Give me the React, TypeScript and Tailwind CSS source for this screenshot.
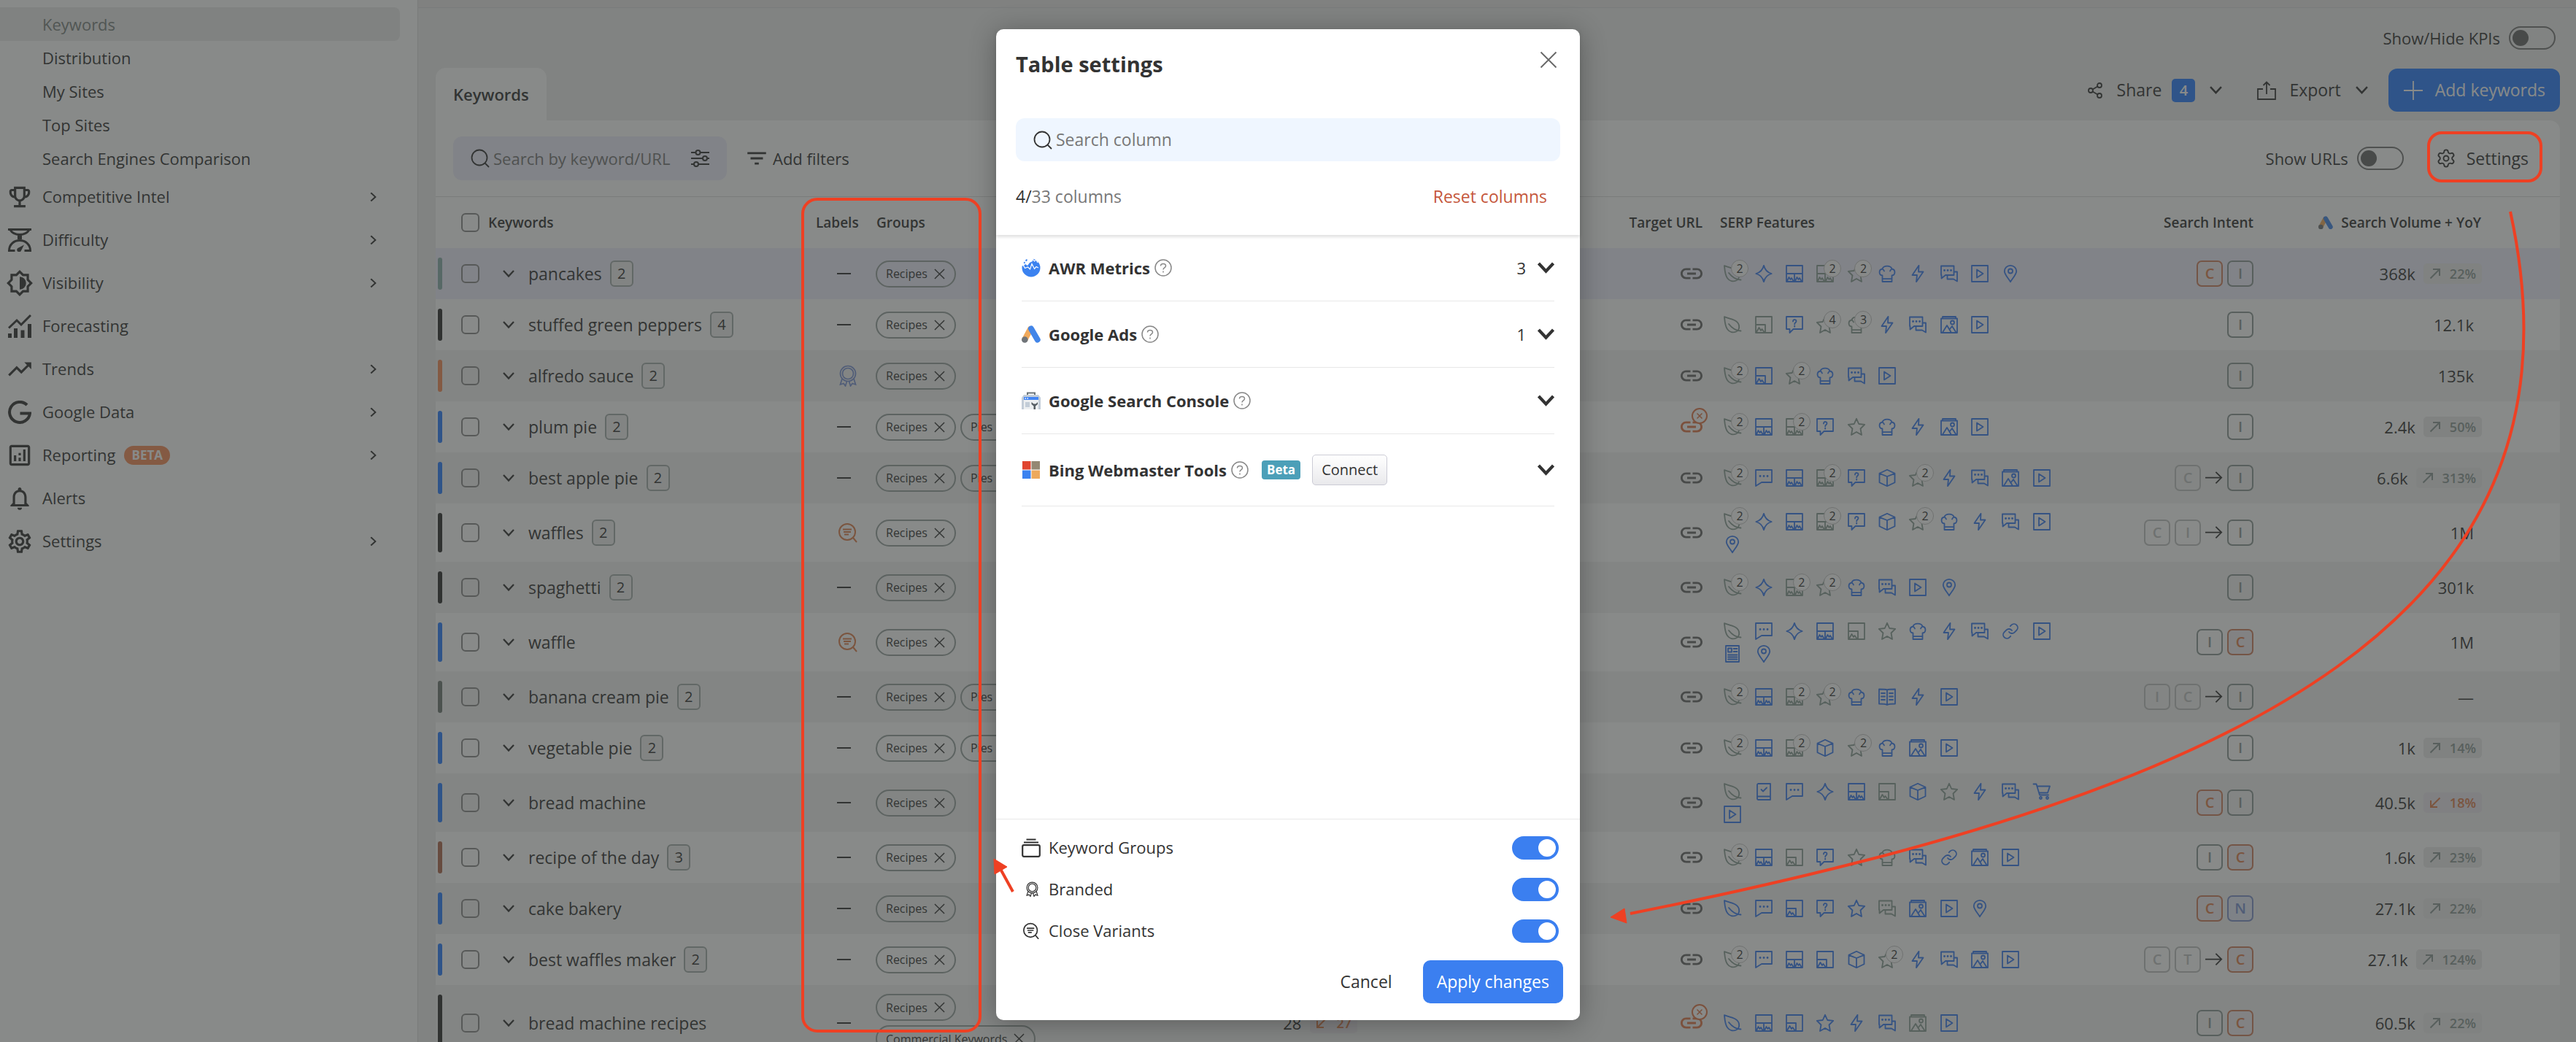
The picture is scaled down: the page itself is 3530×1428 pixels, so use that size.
import type { ReactNode } from "react";
import clsx from "clsx";
import { Link, Settings, Share2 } from "lucide-react";
import {
  MdFilterList,
  MdLink,
  MdOutlineAnalytics,
  MdOutlineBrightness6,
  MdOutlineEmojiEvents,
  MdOutlineNotifications,
  MdOutlineSettings,
  MdTrendingUp,
} from "react-icons/md";

type Row = {
  keyword: string;
  variants?: number;
  bar: string;
  label?: "branded" | "variant";
  groups?: string[];
  broken?: boolean;
  rank?: string;
  rankChange?: string;
  features: string; // "leaf:2" = icon with a count, "-leaf" = greyed out
  was?: string;
  intent: string;
  volume: string;
  yoy?: string;
  down?: boolean;
};

const rows: Row[] = [
  { keyword: "pancakes", variants: 2, bar: "bg-[#8ab0ac]", features: "leaf:2 spark imgs imgs:2 star:2 chef bolt chat play pin", intent: "CI", volume: "368k", yoy: "22%" },
  { keyword: "stuffed green peppers", variants: 4, bar: "bg-[#2e2e2e]", features: "-leaf -thumb ask star:4 chef:3 bolt chat image play", intent: "I", volume: "12.1k" },
  { keyword: "alfredo sauce", variants: 2, bar: "bg-[#f68c5a]", label: "branded", features: "leaf:2 thumb star:2 chef chat play", intent: "I", volume: "135k" },
  { keyword: "plum pie", variants: 2, bar: "bg-blue-500", groups: ["Recipes", "Pies"], broken: true, features: "leaf:2 imgs imgs:2 ask -star chef bolt image play", intent: "I", volume: "2.4k", yoy: "50%" },
  { keyword: "best apple pie", variants: 2, bar: "bg-blue-500", groups: ["Recipes", "Pies"], features: "leaf:2 comment imgs imgs:2 ask box star:2 bolt chat image play", was: "C", intent: "I", volume: "6.6k", yoy: "313%" },
  { keyword: "waffles", variants: 2, bar: "bg-[#2e2e2e]", label: "variant", features: "leaf:2 spark imgs imgs:2 ask box star:2 chef bolt chat play pin", was: "CI", intent: "I", volume: "1M" },
  { keyword: "spaghetti", variants: 2, bar: "bg-[#2e2e2e]", features: "leaf:2 spark imgs:2 star:2 chef chat play pin", intent: "I", volume: "301k" },
  { keyword: "waffle", bar: "bg-blue-500", label: "variant", features: "-leaf comment spark imgs -thumb -star chef bolt chat link play news pin", intent: "IC", volume: "1M" },
  { keyword: "banana cream pie", variants: 2, bar: "bg-[#707a75]", groups: ["Recipes", "Pies"], features: "leaf:2 imgs imgs:2 star:2 chef book bolt play", was: "IC", intent: "I", volume: "—" },
  { keyword: "vegetable pie", variants: 2, bar: "bg-blue-500", groups: ["Recipes", "Pies"], features: "leaf:2 imgs imgs:2 box star:2 chef image play", intent: "I", volume: "1k", yoy: "14%" },
  { keyword: "bread machine", bar: "bg-blue-500", features: "-leaf doc comment spark imgs -thumb box -star bolt chat cart play", intent: "CI", volume: "40.5k", yoy: "18%", down: true },
  { keyword: "recipe of the day", variants: 3, bar: "bg-[#b06a50]", features: "leaf:2 imgs -thumb ask -star -chef chat link image play", intent: "IC", volume: "1.6k", yoy: "23%" },
  { keyword: "cake bakery", bar: "bg-blue-500", features: "leaf comment thumb ask star -chat image play pin", intent: "CN", volume: "27.1k", yoy: "22%" },
  { keyword: "best waffles maker", variants: 2, bar: "bg-blue-500", features: "leaf:2 comment imgs thumb box star:2 bolt chat image play", was: "CT", intent: "C", volume: "27.1k", yoy: "124%" },
  { keyword: "bread machine recipes", bar: "bg-[#2e2e2e]", groups: ["Recipes", "Commercial Keywords"], broken: true, rank: "28", rankChange: "27", features: "leaf imgs thumb star bolt chat -image play", intent: "IC", volume: "60.5k", yoy: "22%" },
];

const featurePaths: Record<string, ReactNode> = {
  leaf: <path d="M1 1.2c7 2.6 18.5 3.8 20 11.8.8 4-1 7-4 8.500-4 1.700-9 1-12-3.500C1.800 13.500 1.500 7 1 1.200zM7 11c3.500 4.500 9 9.300 16.500 9.500" />,
  spark: <path d="M12 .8c1.400 6 4.500 9.600 10.700 11.200C16.500 13.600 13.400 17.200 12 23.200 10.600 17.200 7.500 13.600 1.300 12 7.500 10.400 10.600 6.800 12 .8z" />,
  imgs: <path d="M1 1h22v22H1zM1 12h22M12 12v11M2 22l2.500-5 2 3 1.500-2 2.500 4M13 22l2.500-5 2 3 1.500-2 2.500 4" />,
  thumb: <path d="M1 1h22v22H1zM1 12h13v11M2 22l3.500-6 2.500 4 1.500-2 3 4" />,
  ask: <path d="M1 1h22v17H10.500L5.500 23v-5H1zM10 7.500c0-3.500 4.500-3 4.500-.3 0 1.800-2.300 1.800-2.300 4M12.200 13.500v1.200" />,
  comment: (
    <>
      <path d="M1 1h22v17H9l-8 5z" />
      <path d="M7 9.500h.1M12 9.500h.1M17 9.500h.1" strokeWidth="2.800" />
    </>
  ),
  box: <path d="M12 .8l10.500 5v12.400L12 23.200l-10.500-5V5.800zM1.500 5.800L12 10l10.500-4.200M12 10v13" />,
  star: <path d="M12 .8l3.200 7.200 8 .9-5.700 5.600 1.500 8.500-7-4-7 4 1.500-8.500L.8 8.900l8-.9z" />,
  chef: <path d="M5.500 23V14.500C.5 14 0 6.500 5.500 5.500 7 .2 17 .2 18.500 5.500 24 6.500 23.500 14 18.500 14.500V23zM5.500 19.200h13M8 8.500c-.4-1-1.200-2.200-2.500-3M16 8.500c.4-1 1.200-2.200 2.500-3" />,
  bolt: <path d="M13.500 .8L4.500 14h6.500l-1 9.200L19.500 9.500h-6.500z" />,
  chat: (
    <>
      <path d="M1 1.500h17.500v12.500H7l-5.500 4.500V14H1zM18.500 9.500h4.500v13l-5-3H9.500V14" />
      <path d="M5.500 7.500h.1M10 7.500h.1M14.500 7.500h.1" strokeWidth="2.800" />
    </>
  ),
  image: <path d="M3 1h18v2.500M1 3.500h22V23H1zM3 3.500V1M3 22.500l6-9.500 5.500 9M12.500 18.500l3.500-4.500 5.500 8.500M14 9a2.500 2.500 0 105 0 2.500 2.500 0 10-5 0" />,
  play: <path d="M1 1h22v22H1zM8 6.500v11l8.500-5.500z" />,
  pin: <path d="M12 23.200C8.500 17.500 3.800 13 3.800 8.500a8.200 7.700 0 0116.400 0C20.200 13 15.500 17.500 12 23.200zM9 8.500a3 3 0 106 0 3 3 0 10-6 0" />,
  news: <path d="M3 1h18v22H3zM6 4.500h5v5H6zM13.500 5h5M13.500 9h5M6 13.500h12.500M6 16.500h12.500M6 19.500h12.500" />,
  book: <path d="M12 2.500C10 1.500 5 1.500 1 1.500v20c4 0 9 0 11 1.500 2-1.500 7-1.500 11-1.500v-20c-4 0-9 0-11 1zM12 2.500V23M4 7h5M4 11.500h5M4 16h5M15 7h5M15 11.500h5M15 16h5" />,
  doc: <path d="M4 1h17v22H4.500A1.500 1.500 0 013 21.500V2.500A1.500 1.500 0 014 1zM3 18.500h18M8.500 9l2.500 2.500 5-5" />,
  cart: <path d="M.5 1.500h4L9 16.500h12M5.500 4.500H23l-3 9H8.200M9 20.500a1.500 1.500 0 103 0 1.500 1.500 0 10-3 0M18 20.500a1.500 1.500 0 103 0 1.500 1.500 0 10-3 0" />,
};

function Feature({ code }: { code: string }) {
  const [name, count] = code.replace("-", "").split(":");
  const grey = code.startsWith("-") || count !== undefined;
  return (
    <span className={clsx("relative flex h-[31px] items-center justify-center", grey ? "text-[#8a9e96]" : "text-[#3b7cf0]")}>
      {name === "link" ? (
        <Link className="size-6" strokeWidth={1.8} />
      ) : (
        <svg viewBox="0 0 24 24" className="size-6 overflow-visible" fill="none" stroke="currentColor" strokeWidth="1.8" strokeLinejoin="round" strokeLinecap="round">
          {featurePaths[name]}
        </svg>
      )}
      {count && (
        <span className="absolute -top-1 left-[19px] flex size-6 items-center justify-center rounded-full border border-[#c4c4c4] bg-white text-base text-[#333]">
          {count}
        </span>
      )}
    </span>
  );
}

function Chevron({ className, stroke = 2.3 }: { className?: string; stroke?: number }) {
  return (
    <svg viewBox="0 0 16 12" className={className} fill="none" stroke="currentColor" strokeWidth={stroke}>
      <path d="M1 2l7 7.500L15 2" />
    </svg>
  );
}

function Cross({ className, stroke = 1.2 }: { className?: string; stroke?: number }) {
  return (
    <svg viewBox="0 0 16 16" className={className} fill="none" stroke="currentColor" strokeWidth={stroke}>
      <path d="M1 1l14 14M15 1L1 15" />
    </svg>
  );
}

function SearchIcon() {
  return (
    <svg viewBox="0 0 26 26" className="size-[26px] shrink-0 text-[#333]" fill="none" stroke="currentColor" strokeWidth="1.800">
      <circle cx="12" cy="12" r="10.500" />
      <path d="M19.500 19.500l5.500 5.500" />
    </svg>
  );
}

function Ribbon({ className }: { className?: string }) {
  return (
    <svg viewBox="0 0 24 30" className={className} fill="none" stroke="currentColor" strokeWidth="1.700">
      <circle cx="12" cy="12" r="10.500" />
      <circle cx="12" cy="12" r="7.500" />
      <path d="M4 19l-2.500 8 4.500-1.500L8.500 29l2-6.500M20 19l2.500 8-4.500-1.500-2.500 3.500-2-6.500" />
    </svg>
  );
}

function VariantIcon({ className }: { className?: string }) {
  return (
    <svg viewBox="0 0 26 28" className={className} fill="none" stroke="currentColor" strokeWidth="2">
      <circle cx="12" cy="13" r="11" />
      <path d="M20 21l5 6M6 9.500h12M7 13h10M8 16.500h6" />
    </svg>
  );
}

function AdsIcon({ className }: { className?: string }) {
  return (
    <svg viewBox="0 0 26 24" className={className} fill="none" strokeLinecap="round" strokeWidth="8">
      <path d="M12 5L4.500 19" stroke="#f0a95c" />
      <circle cx="4.300" cy="19.500" r="4.300" fill="#70757a" />
      <path d="M13 4.500L21.700 19.500" stroke="#4285e8" />
    </svg>
  );
}

function Toggle({ id, checked = false }: { id: string; checked?: boolean }) {
  return (
    <input
      id={id}
      type="checkbox"
      role="switch"
      defaultChecked={checked}
      className="flex h-8 w-16 shrink-0 appearance-none items-center rounded-full border-2 border-[#777] pl-[3px] before:size-[22px] before:rounded-full before:bg-[#666] checked:border-[#3b7ff0] checked:bg-[#3b7ff0] checked:pl-[34px] checked:before:size-6 checked:before:bg-white"
    />
  );
}

function CheckBox({ label }: { label: string }) {
  return <input type="checkbox" aria-label={label} className="block h-[26px] w-[25px] appearance-none rounded-[6px] border-2 border-[#8a8a8a]" />;
}

function DifficultyIcon() {
  return (
    <svg viewBox="0 0 32 32" className="size-8" fill="none" stroke="currentColor" strokeWidth="3">
      <path d="M0 1.500h32M3 2c3 5 8 6.500 13 6.500S26 7 29 2" />
      <path d="M16 8v7" strokeWidth="6" />
      <path d="M9.500 30.500H1.500C1.500 22 8 16.500 16 16.500s14.500 5.500 14.500 14H22.500" />
      <path d="M22 22.500l-4 8a3 3 0 11-4.500-3.500z" fill="currentColor" strokeWidth="0" />
    </svg>
  );
}

function ForecastIcon() {
  return (
    <svg viewBox="0 0 32 32" className="size-8" fill="none" stroke="currentColor" strokeWidth="3">
      <path d="M1 18.500L12 8l6 6L31 1" />
      <path d="M2.500 26v6M10.500 19v13M20 21.500v10.500M29.500 13v19" strokeWidth="5" />
    </svg>
  );
}

function GoogleG() {
  return (
    <svg viewBox="0 0 32 32" className="size-8" fill="none" stroke="currentColor" strokeWidth="4">
      <path d="M26 6a14 14 0 104 11.500H16.500" />
    </svg>
  );
}

const subItems = ["Keywords", "Distribution", "My Sites", "Top Sites", "Search Engines Comparison"];

const navItems = [
  { name: "Competitive Intel", icon: <MdOutlineEmojiEvents />, more: true },
  { name: "Difficulty", icon: <DifficultyIcon />, more: true },
  { name: "Visibility", icon: <MdOutlineBrightness6 />, more: true },
  { name: "Forecasting", icon: <ForecastIcon />, more: false },
  { name: "Trends", icon: <MdTrendingUp />, more: true },
  { name: "Google Data", icon: <GoogleG />, more: true },
  { name: "Reporting", icon: <MdOutlineAnalytics />, more: true },
  { name: "Alerts", icon: <MdOutlineNotifications />, more: false },
  { name: "Settings", icon: <MdOutlineSettings />, more: true },
];

function Sidebar() {
  return (
    <nav className="w-[573px] shrink-0 border-r border-[#ddd] bg-white pt-[10px]">
      {subItems.map((name, i) => (
        <a
          key={name}
          href="#"
          className={clsx("mr-6 flex h-[46px] items-center rounded-r-lg pl-[58px]", i === 0 && "bg-[#ececec] text-[#7c8480]")}
        >
          {name}
        </a>
      ))}
      {navItems.map((item) => (
        <a key={item.name} href="#" className="flex h-[59px] items-center pr-[54px] pl-2">
          <span className="flex w-[38px] justify-center [&>svg]:shrink-0 [&>svg:not(.size-8)]:size-[38px]">{item.icon}</span>
          <span className="ml-3">{item.name}</span>
          {item.name === "Reporting" && (
            <span className="ml-3 rounded-full bg-[#f68c5a] px-[10px] text-[17px] leading-[26px] font-bold text-white">BETA</span>
          )}
          {item.more && <Chevron className="ml-auto w-[13px] -rotate-90" stroke={2.5} />}
        </a>
      ))}
    </nav>
  );
}

function PageHeader() {
  return (
    <div className="flex items-end justify-between">
      <button className="h-[72px] rounded-t-[14px] bg-white px-6 font-semibold">Keywords</button>
      <div className="flex flex-col items-end pt-[25px] pb-3">
        <div className="mb-[26px] flex items-center gap-3 pr-[6px]">
          <label htmlFor="kpis" className="leading-8">Show/Hide KPIs</label>
          <Toggle id="kpis" />
        </div>
        <div className="flex h-[59px] items-center text-[23px] font-medium">
          <button className="flex items-center">
            <Share2 className="mr-[18px] size-6" strokeWidth={1.8} />
            Share
            <span className="mx-[14px] w-8 rounded-[5px] bg-blue-500 text-center text-xl leading-8 font-semibold text-white">4</span>
            <Chevron className="ml-[6px] w-[17px]" />
          </button>
          <button className="ml-12 flex items-center">
            <svg viewBox="0 0 26 26" className="mr-[18px] size-[26px]" fill="none" stroke="currentColor" strokeWidth="1.800">
              <path d="M8 11H1v14h24V11h-7M13 18V2M8.500 6L13 1.500 17.500 6" />
            </svg>
            Export
            <Chevron className="ml-5 w-[17px]" />
          </button>
          <button className="ml-7 flex h-full items-center gap-4 rounded-[12px] bg-blue-500 px-5 text-white">
            <svg viewBox="0 0 28 28" className="size-7" stroke="currentColor" strokeWidth="1.800">
              <path d="M14 1v26M1 14h26" />
            </svg>
            Add keywords
          </button>
        </div>
      </div>
    </div>
  );
}

function Toolbar() {
  return (
    <div className="flex h-[105px] items-center border-b border-[#dedede] pr-[43px] pl-6">
      <div className="flex h-[60px] w-[375px] items-center rounded-[12px] bg-[#eeeefc] px-6">
        <SearchIcon />
        <input aria-label="Search by keyword/URL" placeholder="Search by keyword/URL" className="ml-[5px] min-w-0 flex-1 outline-none placeholder:text-[#777]" />
        <svg viewBox="0 0 25 26" className="ml-3 w-[25px]" fill="none" stroke="currentColor" strokeWidth="2">
          <path d="M0 5h6.500M12.500 5H25M0 13h16M22 13h3M0 21h4M10 21h15" />
          <circle cx="9.500" cy="5" r="3" />
          <circle cx="19" cy="13" r="3" />
          <circle cx="7" cy="21" r="3" />
        </svg>
      </div>
      <button className="ml-6 flex items-center gap-[5px]">
        <MdFilterList className="size-[34px]" />
        Add filters
      </button>
      <div className="ml-auto flex items-center gap-3">
        <label htmlFor="urls">Show URLs</label>
        <Toggle id="urls" />
      </div>
      <button className="ml-11 flex items-center gap-[14px] text-[23px]">
        <Settings className="size-7" strokeWidth={1.6} />
        Settings
      </button>
    </div>
  );
}

function Chip({ name }: { name: string }) {
  return (
    <span className="flex h-[37px] items-center gap-[9px] rounded-full border-2 border-[#98a3a0] pr-[13px] pl-3 text-base">
      {name}
      <button aria-label={`Remove ${name}`}>
        <Cross className="w-[15px]" stroke={1.5} />
      </button>
    </span>
  );
}

const intentStyles: Record<string, string> = {
  I: "border-[#8d9a96] text-[#8d9a96]",
  C: "border-[#d08060] bg-[#f1edf0] text-[#e0804f]",
  N: "border-[#8094cc] bg-[#e8ecfa] text-[#7a94d4]",
};

function Intent({ letter, faded }: { letter: string; faded?: boolean }) {
  return (
    <span
      className={clsx(
        "flex size-9 items-center justify-center rounded-[7px] border-2 text-[20px] font-semibold",
        faded ? "border-[#c2c4c3] text-[#c2c4c3]" : intentStyles[letter],
      )}
    >
      {letter}
    </span>
  );
}

function Trend({ value, down }: { value: string; down?: boolean }) {
  return (
    <span className={clsx("flex items-center gap-3 rounded-[5px] px-2 text-[18px] leading-7 font-semibold", down ? "bg-[#ebe6ee] text-[#e0804f]" : "bg-[#ececec] text-[#8d9a96]")}>
      <svg viewBox="0 0 16 16" className={clsx("w-4", down && "rotate-180")} fill="none" stroke="currentColor" strokeWidth="2">
        <path d="M1.500 14.500L14 2M5 2h9v9" />
      </svg>
      {value}
    </span>
  );
}

function KeywordRow({ row, index }: { row: Row; index: number }) {
  const features = row.features.split(" ");
  const tall = features.length > 11;
  const last = index === rows.length - 1;
  return (
    <tr className={clsx(index === 0 ? "bg-[#eeeefc]" : index % 2 === 0 && "bg-[#f3f3f3]", last ? "h-[104px]" : tall ? "h-20" : "h-[70px]")}>
      <td>
        <div className="flex items-center pl-[3px]">
          <span className={clsx("mr-[26px] w-[6px] rounded-full", row.bar, last ? "h-[78px]" : tall ? "h-[54px]" : "h-11")} />
          <CheckBox label={`Select ${row.keyword}`} />
        </div>
      </td>
      <td>
        <div className="flex items-center pl-8 text-[23px]">
          <button aria-label={`Expand ${row.keyword}`}>
            <Chevron className="w-4" />
          </button>
          <span className="ml-[19px]">{row.keyword}</span>
          {row.variants && (
            <span className="ml-[11px] w-8 rounded-[6px] border-2 border-[#a5aeab] bg-[#f0f0f0] text-center text-[20px] leading-8">{row.variants}</span>
          )}
        </div>
      </td>
      <td>
        <div className="flex justify-end pr-[23px]">
          {!row.label && <span className="mr-[1px] h-[2px] w-[19px] bg-[#333]" />}
          {row.label === "branded" && <Ribbon className="-mr-[7px] w-6 text-[#7b93d6]" />}
          {row.label === "variant" && <VariantIcon className="-mr-2 w-[26px] text-[#e0804f]" />}
        </div>
      </td>
      <td>
        <div className="flex flex-wrap gap-[6px] pl-[10px]">
          {(row.groups ?? ["Recipes"]).map((g) => (
            <Chip key={g} name={g} />
          ))}
        </div>
      </td>
      <td>
        {row.rank && (
          <div className="flex items-center justify-end gap-3 pr-[10px]">
            {row.rank}
            <Trend value={row.rankChange ?? ""} down />
          </div>
        )}
      </td>
      <td />
      <td>
        <div className={clsx("relative mr-[11px] ml-auto w-[34px]", row.broken ? "text-[#e0774a]" : "text-[#666]")}>
          <MdLink className="size-9" />
          {row.broken && (
            <span className="absolute -top-2 left-[18px] flex size-[22px] items-center justify-center rounded-full border-2 border-current bg-white">
              <Cross className="w-2" stroke={3} />
            </span>
          )}
        </div>
      </td>
      <td>
        <div className="grid w-[474px] grid-cols-11 pl-2">
          {features.map((f, i) => (
            <Feature key={i} code={f} />
          ))}
        </div>
      </td>
      <td>
        <div className="flex items-center justify-end gap-[6px] pr-3">
          {row.was && (
            <>
              {[...row.was].map((l) => (
                <Intent key={l} letter={l} faded />
              ))}
              <svg viewBox="0 0 20 16" className="w-6" fill="none" stroke="currentColor" strokeWidth="1.500">
                <path d="M0 8h18M12 1.500L18.500 8 12 14.500" />
              </svg>
            </>
          )}
          {[...row.intent].map((l) => (
            <Intent key={l} letter={l} />
          ))}
        </div>
      </td>
      <td>
        <div className={clsx("flex items-center justify-end gap-[11px]", row.yoy ? "pr-[11px]" : "pr-[22px]")}>
          {row.volume}
          {row.yoy && <Trend value={row.yoy} down={row.down} />}
        </div>
      </td>
      <td />
    </tr>
  );
}

function KeywordTable() {
  return (
    <table className="w-full table-fixed border-collapse text-left">
      <colgroup>
        <col className="w-[60px]" />
        <col className="w-[436px]" />
        <col className="w-[97px]" />
        <col className="w-[300px]" />
        <col className="w-[380px]" />
        <col />
        <col className="w-[126px]" />
        <col className="w-[499px]" />
        <col className="w-[256px]" />
        <col className="w-[312px]" />
        <col className="w-[96px]" />
      </colgroup>
      <thead>
        <tr className="h-[70px] text-[19px] [&>th]:font-semibold">
          <th className="pl-[35px]">
            <CheckBox label="Select all keywords" />
          </th>
          <th className="pl-3">Keywords</th>
          <th className="pl-[25px]">Labels</th>
          <th className="pl-[11px]">Groups</th>
          <th />
          <th />
          <th className="pr-3 text-right whitespace-nowrap">Target URL</th>
          <th className="pl-3">SERP Features</th>
          <th className="pr-3 text-right">Search Intent</th>
          <th className="pr-3">
            <span className="flex items-center justify-end gap-[11px]">
              <AdsIcon className="w-5" />
              Search Volume + YoY
            </span>
          </th>
          <th />
        </tr>
      </thead>
      <tbody>
        {rows.map((row, i) => (
          <KeywordRow key={row.keyword} row={row} index={i} />
        ))}
      </tbody>
    </table>
  );
}

function AwrLogo() {
  return (
    <svg viewBox="0 0 26 26" className="w-[26px]">
      <circle cx="13" cy="13" r="12.500" fill="#3b82f0" />
      <path d="M-1 7l3 4 3-3 3 2 3-4 4-2 1-6H3z" fill="#fff" />
      <path d="M5 2.500l2-1.500 1 1.500-2 2zM2.500 6L4 4.500l1 1.500-1 1.500z" fill="#3b82f0" />
      <path d="M1.500 8l3 5.500 4-1.500 3 3L14 7.500l3.500 7 2.500-3 3 1.500M15 1l2.500 3L20 2l2 4" fill="none" stroke="#fff" strokeWidth="1.200" />
    </svg>
  );
}

function ConsoleLogo() {
  return (
    <svg viewBox="0 0 26 24" className="w-[26px]">
      <path d="M8 4V1.500h10V4" fill="none" stroke="#6b7478" strokeWidth="2" />
      <path d="M3 4h20l3 4v16H0V8z" fill="#c3cdd8" />
      <path d="M3 7h20v4H3z" fill="#4285f4" />
      <path d="M4.500 9h1.500M7.500 9H9" stroke="#fff" strokeWidth="1.400" />
      <path d="M3 11h20v13H3z" fill="#eceff1" />
      <path d="M5 14h6v7H5z" fill="#c3cdd8" />
      <path d="M13.500 14v3l3 2.500V24h2.500v-4.500l3-2.500v-3l-2.500 2.500h-3z" fill="#555d63" />
    </svg>
  );
}

function BingLogo() {
  return (
    <svg viewBox="0 0 24 24" className="ml-[1px] w-6">
      <path d="M0 0h11.500v11.500H0z" fill="#e0452f" />
      <path d="M12.500 0H24v11.500H12.500z" fill="#948873" />
      <path d="M0 12.500h11.500V24H0z" fill="#3b82f0" />
      <path d="M12.500 12.500H24V24H12.500z" fill="#eda95c" />
    </svg>
  );
}

const sources = [
  { name: "AWR Metrics", logo: <AwrLogo />, count: 3 },
  { name: "Google Ads", logo: <AdsIcon className="w-[26px]" />, count: 1 },
  { name: "Google Search Console", logo: <ConsoleLogo /> },
  { name: "Bing Webmaster Tools", logo: <BingLogo />, beta: true },
];

const options = [
  {
    name: "Keyword Groups",
    icon: (
      <svg viewBox="0 0 26 26" className="w-[26px]" fill="none" stroke="currentColor" strokeWidth="2.200">
        <path d="M6.500 1.500h13M3 5.500h20" />
        <rect x="1.200" y="9.200" width="23.600" height="15.600" rx="2" />
      </svg>
    ),
  },
  { name: "Branded", icon: <Ribbon className="ml-[6px] w-[17px]" /> },
  { name: "Close Variants", icon: <VariantIcon className="ml-[2px] w-[22px]" /> },
];

function TableSettings() {
  return (
    <div role="dialog" aria-label="Table settings" className="flex h-full w-[800px] flex-col rounded-[10px] bg-white shadow-[0_4px_36px_rgba(0,0,0,0.3)]">
      <header className="px-[27px] pt-[30px] pb-[37px] shadow-[0_3px_4px_rgba(0,0,0,0.12)]">
        <div className="flex items-start justify-between pr-1">
          <h2 className="text-[29px] leading-9 font-bold">Table settings</h2>
          <button aria-label="Close">
            <Cross className="w-6 text-[#666]" />
          </button>
        </div>
        <div className="mt-14 flex h-[59px] items-center rounded-[12px] bg-[#eff6ff] px-6">
          <SearchIcon />
          <input aria-label="Search column" placeholder="Search column" className="ml-[5px] flex-1 text-[23px] outline-none placeholder:text-[#777]" />
        </div>
        <div className="mt-8 flex justify-between pr-[18px] leading-8">
          <span className="text-[23px] text-[#777]">
            <span className="text-[#333]">4/</span>33 columns
          </span>
          <button className="text-[23px] text-[#c5573c]">Reset columns</button>
        </div>
      </header>
      <div className="flex-1 px-[35px]">
        {sources.map((s) => (
          <div key={s.name} className={clsx("flex items-center border-b border-[#e8e8e8]", s.beta ? "h-[99px]" : "h-[91px]")}>
            <span className="w-[37px]">{s.logo}</span>
            <span className="font-bold">{s.name}</span>
            <svg viewBox="0 0 24 24" className="ml-[6px] size-6 text-[#888]" fill="none" stroke="currentColor" strokeWidth="1.500">
              <circle cx="12" cy="12" r="11" />
              <path d="M8.500 9.500c0-4 7-4 7 0 0 2.500-3.500 2.200-3.500 5M12 16.500v2" />
            </svg>
            {s.beta && (
              <>
                <span className="ml-[18px] rounded-[4px] bg-[#4c9fb8] px-[7px] text-[17px] leading-[26px] font-bold text-white">Beta</span>
                <button className="ml-4 h-[42px] rounded-[5px] border border-[#ccccd6] bg-linear-to-b from-white to-[#e9e9ec] px-3 text-xl">Connect</button>
              </>
            )}
            <span className="ml-auto">{s.count}</span>
            <button aria-label={`Expand ${s.name}`} className="ml-4">
              <Chevron className="w-[23px]" stroke={3} />
            </button>
          </div>
        ))}
      </div>
      <footer className="border-t border-[#e8e8e8] pt-[10px] pb-[23px]">
        {options.map((o) => (
          <div key={o.name} className="flex h-[57px] items-center justify-between pr-[29px] pl-[35px]">
            <label htmlFor={o.name} className="flex items-center">
              <span className="w-[37px]">{o.icon}</span>
              {o.name}
            </label>
            <Toggle id={o.name} checked />
          </div>
        ))}
        <div className="mt-3 flex justify-end gap-[22px] pr-[23px] text-[23px]">
          <button className="px-5">Cancel</button>
          <button className="h-[59px] rounded-[10px] bg-[#3b7ff0] px-[19px] text-white">Apply changes</button>
        </div>
      </footer>
    </div>
  );
}

function Annotations() {
  return (
    <svg viewBox="0 0 3530 1428" className="pointer-events-none absolute inset-0 h-full w-full" fill="none" stroke="#ee4023" strokeWidth="4">
      <rect x="1100" y="273" width="243" height="1140" rx="20" />
      <rect x="3328" y="182" width="154" height="66" rx="18" />
      <path d="M3440 290C3560 840 3090 1082 2234 1252" strokeWidth="4" />
      <path d="M2207 1257l19-12 3 20z" fill="#ee4023" strokeWidth="1" />
      <path d="M1388 1222L1371 1191" />
      <path d="M1362 1177l18 11-17 10z" fill="#ee4023" strokeWidth="1" />
    </svg>
  );
}

export default function App() {
  return (
    <div className="relative h-screen overflow-hidden bg-[#eeeeee] font-['Open_Sans',sans-serif] text-[22px] text-[#333]">
      <div className="flex h-full">
        <Sidebar />
        <main className="min-w-0 flex-1">
          <div className="h-[11px] border-b border-[#dcdce0] bg-[#eceaea]" />
          <div className="pr-[22px] pl-6">
            <PageHeader />
            <div className="rounded-tr-[14px] bg-white">
              <Toolbar />
              <KeywordTable />
            </div>
          </div>
        </main>
      </div>
      <div className="absolute inset-0 flex justify-center bg-[#323533]/58 pt-10 pb-[30px]">
        <TableSettings />
      </div>
      <Annotations />
    </div>
  );
}
